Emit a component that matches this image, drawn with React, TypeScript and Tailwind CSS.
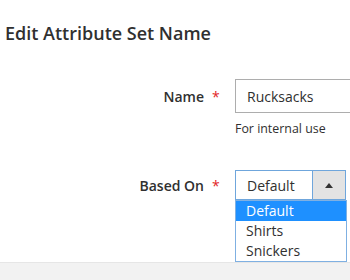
import React from 'react';

const options = ['Default', 'Shirts', 'Snickers'];

export default function App() {
  return (
    <div className="w-[350px] h-[280px] bg-white overflow-hidden flex flex-col font-['Open_Sans',sans-serif] text-[#303030]">
      <div className="h-[262px] relative">
        {/* Heading */}
        <h1 className="pt-[21px] pl-[5px] text-[18px] leading-[25px] font-semibold text-[#303030]">
          Edit Attribute Set Name
        </h1>

        {/* Name row */}
        <div className="flex items-center mt-[33px] h-[34px]">
          <label className="w-[204px] text-right text-[14px] font-semibold">Name</label>
          <span className="w-[31px] pl-[8px] text-[#e22626] text-[14px]">*</span>
          <div className="flex-1 h-[34px] border border-[#adadad] border-r-0 pl-[11px] flex items-center text-[14px]">
            Rucksacks
          </div>
        </div>
        <p className="ml-[235px] mt-[7px] text-[12.4px] leading-[18px]">For internal use</p>

        {/* Based On row */}
        <div className="flex items-center mt-[32px] h-[30px]">
          <label className="w-[204px] text-right text-[14px] font-semibold">Based On</label>
          <span className="w-[31px] pl-[8px] text-[#e22626] text-[14px]">*</span>
          <div className="relative w-[111px] h-[30px] border border-[#6fa6dc] flex">
            <div className="flex-1 pl-[11px] flex items-center text-[14px]">Default</div>
            <div className="w-[33px] border-l border-[#6fa6dc] bg-[#e3e3e3] flex items-center justify-center">
              <span className="block w-0 h-0 border-l-[4px] border-r-[4px] border-b-[5px] border-l-transparent border-r-transparent border-b-[#333]" />
            </div>
            {/* Open list */}
            <ul className="absolute left-[-1px] top-[29px] w-[112px] border border-[#7fb0e2] bg-white z-10">
              {options.map((o, i) => (
                <li
                  key={o}
                  className={`h-[20px] pl-[10px] text-[14px] leading-[20px] ${
                    i === 0 ? 'bg-[#1e90ff] text-white' : 'text-[#303030]'
                  }`}
                >
                  {o}
                </li>
              ))}
            </ul>
          </div>
        </div>
      </div>
      <div className="flex-1 bg-[#f2f2f2] border-t border-[#e6e6e6]" />
    </div>
  );
}
